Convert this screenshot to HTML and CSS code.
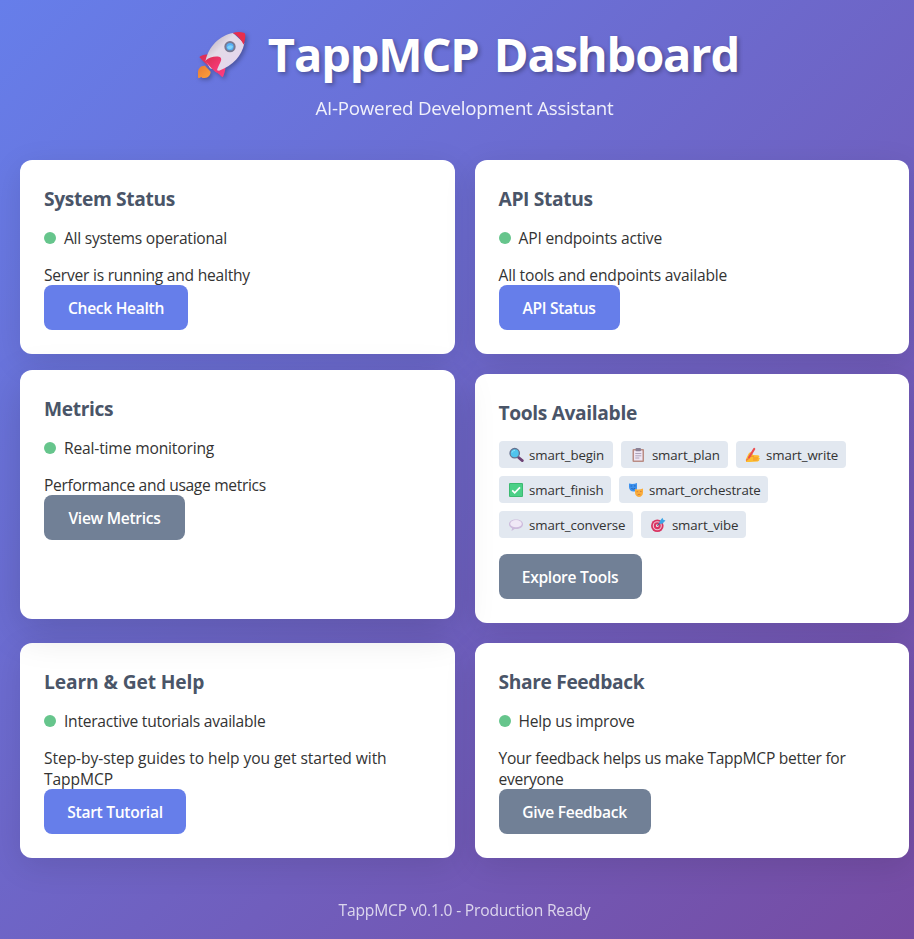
FILE: index.html
```html
<!DOCTYPE html>
<html lang="en">
<head>
<meta charset="utf-8">
<title>TappMCP Dashboard</title>
<link rel="stylesheet" href="styles.css">
</head>
<body>
<div class="page">
  <header class="header">
    <h1 class="title">
      <svg class="rocket" viewBox="0 0 192 180" aria-hidden="true">
        <defs>
          <linearGradient id="hull" x1="0" y1="0" x2="1" y2="1"><stop offset="0.1" stop-color="#b9aebb"/><stop offset="0.4" stop-color="#e3dbe8"/><stop offset="1" stop-color="#e6d3ee"/></linearGradient>
          <linearGradient id="fin" x1="0" y1="0" x2="1" y2="1"><stop offset="0" stop-color="#d92e52"/><stop offset="1" stop-color="#ff3d82"/></linearGradient>
          <linearGradient id="flame" x1="0" y1="0" x2="1" y2="1"><stop offset="0" stop-color="#e87b35"/><stop offset="1" stop-color="#ffa13b"/></linearGradient>
        </defs>
        <path fill="url(#flame)" d="M45 122c-12-1-21 8-21 20v15c0 2 2 3 4 2l6-3 3 3h7c11-1 18-10 18-19z"/>
        <path fill="url(#fin)" d="M28 96c8-6 19-9 29-6l-6 24 36 18 18-19c3 12 1 26-5 40-1 3-4 4-6 1C82 141 45 118 28 96z"/>
        <path fill="url(#hull)" d="M47 106C55 66 88 31 129 24l34 31c-7 36-34 68-76 82L60 130z"/>
        <path fill="#e92e4c" d="M128 24c10-3 22-4 33-1 4 1 5 4 5 8 0 10-2 19-5 28-8-16-18-28-33-35z"/>
        <path fill="url(#fin)" d="M46 107c12-11 27-14 41-12 6 1 8 6 6 12-6 15-12 22-13 37-12-10-25-24-34-37z"/>
        <circle cx="120" cy="65" r="14" fill="#56aef5" stroke="#777891" stroke-width="6"/>
        <path fill="#7fd3fb" d="M111 67c4-7 13-8 18-3-2 9-14 13-18 3z"/>
      </svg>
      <span>TappMCP Dashboard</span>
    </h1>
    <p class="subtitle">AI-Powered Development Assistant</p>
  </header>

  <main class="grid">
    <section class="card system">
      <h2>System Status</h2>
      <div class="status"><i class="dot"></i><span>All systems operational</span></div>
      <p>Server is running and healthy</p>
      <button class="btn primary">Check Health</button>
    </section>
    <section class="card api">
      <h2>API Status</h2>
      <div class="status"><i class="dot"></i><span>API endpoints active</span></div>
      <p>All tools and endpoints available</p>
      <button class="btn primary">API Status</button>
    </section>
    <section class="card metrics raised">
      <h2>Metrics</h2>
      <div class="status"><i class="dot"></i><span>Real-time monitoring</span></div>
      <p>Performance and usage metrics</p>
      <button class="btn">View Metrics</button>
    </section>
    <section class="card tools">
      <h2>Tools Available</h2>
      <div class="chips">
        <span class="chip begin"><svg viewBox="0 0 16 16"><path d="M10 10l4.3 3.6" stroke="#6d4274" stroke-width="2.8" stroke-linecap="round"/><circle cx="6.7" cy="6.2" r="4.7" fill="#50c4ed" stroke="#66718f" stroke-width="1.3"/><path d="M4 5.6c.5-1.5 1.6-2.2 3-2.3" stroke="#91e4fa" fill="none"/></svg>smart_begin</span>
        <span class="chip plan"><svg viewBox="0 0 16 16"><rect x="2.5" y="2" width="11.5" height="13" rx="1" fill="#b98c84"/><path fill="#eee6f4" d="M4 3.5h8.5v10H4z"/><rect x="5.5" y="1" width="5.5" height="3.2" rx="1" fill="#8b8195"/><path d="M5.3 6.5h6M5.3 8.8h6M5.3 11h4" stroke="#a69cb3" stroke-width=".9"/></svg>smart_plan</span>
        <span class="chip write"><svg viewBox="0 0 16 16"><path fill="#fdbd2f" d="M1 12l2.4-5C4.5 5 6 5 7 6l1 2 5 .2c2 .4 1.7 2 .4 2.3 2 .2 1.7 2 .3 2.1 1 .7.4 1.8-1 1.8L5 15H1z"/><path d="M4 9.5l5-.2M8 11h5M8 13h4.500" stroke="#ed8c29" stroke-width=".8"/><path d="M4 10.500L9.200 2" stroke="#ed4e50" stroke-width="2.200" stroke-linecap="round"/><path d="M1 13.500l2.500-2" stroke="#ef724a" stroke-width="1.200"/></svg>smart_write</span>
        <span class="chip finish"><svg viewBox="0 0 16 16"><rect x="1" y="1" width="14" height="14" rx="1" fill="#3cba72"/><rect x="2" y="2" width="12" height="12" fill="#4bd087"/><path d="M4.200 8.400l2.500 2.500L12 5.400" fill="none" stroke="#fff" stroke-width="1.700"/></svg>smart_finish</span>
        <span class="chip orchestrate"><svg viewBox="0 0 16 16"><path fill="#3c91ee" d="M1 1.500q4 1 8-.6v5C9 8.500 7 9.500 5.300 9.500 3 9.500 1 7.500 1 5z"/><path d="M2.500 4h1.700M6 3.900h1.700M3.300 6.500q2 1.400 3.800-.2" fill="none" stroke="#205ba9" stroke-width=".8"/><path fill="#fbad3b" d="M7 7q4 1.300 8-.6v4c0 3-2 4.600-4.200 4.500C8.500 14.700 7 13 7 10.500z"/><path d="M8.500 9.700h1.600M12 9.500h1.600M9.500 13q1.600-1.500 3-.2" fill="none" stroke="#c97838" stroke-width=".8"/></svg>smart_orchestrate</span>
        <span class="chip converse"><svg viewBox="0 0 16 16"><path fill="#cdbbdc" d="M8 2.500c4 0 7 2 7 4.800s-3 4.800-7 4.800l-1.400-.1L3.500 14l.6-2.700C2.200 10.500 1 9 1 7.300c0-2.800 3-4.800 7-4.800z"/><ellipse cx="8" cy="6.700" rx="5.800" ry="3.600" fill="#f0e8f6"/></svg>smart_converse</span>
        <span class="chip vibe"><svg viewBox="0 0 16 16"><circle cx="7.300" cy="8.700" r="6.300" fill="#d93562"/><circle cx="7.300" cy="8.700" r="4" fill="none" stroke="#efc4d6" stroke-width="1.100"/><circle cx="7.300" cy="8.700" r="1.400" fill="#f6dce6"/><path d="M7.300 8.700L13 3" stroke="#46668f" stroke-width="1.200"/><path fill="#3da5e6" d="M9.500 4.500l2.900-3.700.9 1.900 2.200.8-3.200 3.200-2.800.1z"/></svg>smart_vibe</span>
      </div>
      <button class="btn">Explore Tools</button>
    </section>
    <section class="card learn">
      <h2>Learn &amp; Get Help</h2>
      <div class="status"><i class="dot"></i><span>Interactive tutorials available</span></div>
      <p>Step-by-step guides to help you get started with TappMCP</p>
      <button class="btn primary">Start Tutorial</button>
    </section>
    <section class="card feedback">
      <h2>Share Feedback</h2>
      <div class="status"><i class="dot"></i><span>Help us improve</span></div>
      <p>Your feedback helps us make TappMCP better for everyone</p>
      <button class="btn">Give Feedback</button>
    </section>
  </main>

  <footer class="footer">TappMCP v0.1.0 - Production Ready</footer>
</div>
</body>
</html>
```
FILE: styles.css
```css
* { box-sizing: border-box; margin: 0; padding: 0; }
html, body { overflow: hidden; }
body { font-family: "Open Sans", "Noto Sans", sans-serif; font-size: 15.6px; line-height: 21px; color: #333; }
.page { width: 929px; height: 942px; padding: 21px 20px 0; background: linear-gradient(135deg, #667eea 0%, #764ba2 100%); }
.header { height: 139px; color: #fff; }
.title { display: flex; justify-content: center; gap: 14px; height: 64px; font-size: 47px; line-height: 66px; font-weight: 700; letter-spacing: -1.15px; word-spacing: 4px; white-space: nowrap; text-shadow: 2px 2px 4px rgba(0, 0, 0, .3); }
.rocket { width: 64px; height: 60px; margin-top: 4px; filter: drop-shadow(2px 2px 2px rgba(0, 0, 0, .28)); }
.subtitle { margin-top: 10px; text-align: center; font-size: 18.7px; line-height: 26px; letter-spacing: -.23px; opacity: .9; }
.grid { display: grid; grid-template-columns: 1fr 1fr; grid-template-rows: 194px 249px 215px; gap: 20px; }
.card { padding: 24px; background: #fff; border-radius: 12px; box-shadow: 0 8px 32px rgba(0, 0, 0, .1); }
.raised { transform: translateY(-4px); box-shadow: 0 12px 40px rgba(0, 0, 0, .15); }
h2 { margin-bottom: 16px; font-size: 19.2px; line-height: 27px; padding-top: 1px; height: 27px; font-weight: 700; letter-spacing: -.35px; color: #4a5568; }
.status { display: flex; align-items: center; gap: 8px; height: 21px; margin-bottom: 16px; }
.status span { padding-top: 2px; }
.dot { width: 12px; height: 12px; border-radius: 50%; background: #66c58c; }
.card p { margin-bottom: -1px; padding-top: 1px; }
.btn { display: block; width: 141px; height: 45px; padding-top: 2px; border: 0; border-radius: 8px; background: #718096; color: #fff; font: 600 15.6px/21px "Open Sans", "Noto Sans", sans-serif; letter-spacing: -.3px; white-space: nowrap; text-align: center; position: relative; }
.primary { background: #667eea; }
.system { letter-spacing: -.24px; }
.system .btn { width: 144px; }
.api { letter-spacing: -.18px; }
.api .btn { width: 121px; }
.metrics { letter-spacing: -.32px; }
.metrics .status { letter-spacing: -.16px; }
.tools .btn { width: 143px; }
.learn { letter-spacing: -.08px; }
.learn h2 { letter-spacing: -.1px; }
.learn .status { letter-spacing: -.25px; }
.learn .btn { width: 142px; }
.feedback { letter-spacing: -.28px; }
.feedback .status { letter-spacing: -.2px; }
.feedback .btn { width: 152px; }
.chips { display: flex; flex-wrap: wrap; gap: 8px; margin-bottom: 16px; }
.chip { display: flex; align-items: center; height: 27px; padding: 1px 0 0 9px; border-radius: 4px; background: #e2e8f0; font-size: 13.3px; letter-spacing: -.12px; white-space: nowrap; }
.chip svg { flex: none; width: 16px; height: 16px; margin-right: 5.6px; }
.begin { width: 114px; }
.plan { width: 107px; }
.write { width: 110px; }
.finish { width: 112px; }
.orchestrate { width: 149px; }
.converse { width: 134px; }
.vibe { width: 105px; }
.plan svg, .vibe svg { margin-right: 6.4px; }
.footer { margin-top: 42px; text-align: center; color: #fff; letter-spacing: -.19px; opacity: .75; }
```
